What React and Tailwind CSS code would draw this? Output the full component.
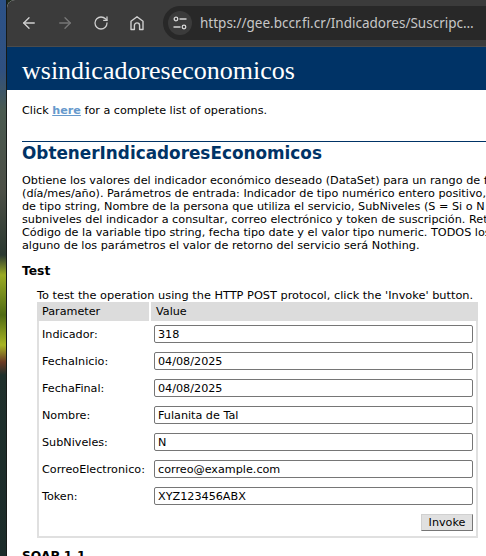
import React from "react";
import { ArrowLeft, ArrowRight, RotateCw } from "lucide-react";

const fields = [
  ["Indicador:", "318"],
  ["FechaInicio:", "04/08/2025"],
  ["FechaFinal:", "04/08/2025"],
  ["Nombre:", "Fulanita de Tal"],
  ["SubNiveles:", "N"],
  ["CorreoElectronico:", "correo@example.com"],
  ["Token:", "XYZ123456ABX"],
];

function TuneIcon() {
  return (
    <svg width="14" height="14" viewBox="0 0 14 14" fill="none" stroke="#d6d6d6" strokeWidth="1.3">
      <circle cx="3" cy="3" r="1.8" />
      <path d="M6.5 3H13.5" />
      <circle cx="11" cy="11" r="1.8" />
      <path d="M0.5 11H7.5" />
    </svg>
  );
}

function HomeIcon() {
  return (
    <svg width="16" height="16" viewBox="0 0 16 16" fill="none" stroke="#cfcfcf" strokeWidth="1.4" strokeLinejoin="round">
      <path d="M2 14.5V6.3L8 1.8L14 6.3V14.5H10.6V10.5A2.6 2.6 0 0 0 5.4 10.5V14.5Z" />
    </svg>
  );
}

export default function App() {
  return (
    <div className="flex w-[486px] h-[556px] overflow-hidden bg-[#1c2a1c] font-['DejaVu_Sans',sans-serif]">
      {/* wallpaper strip */}
      <div className="w-[7px] h-full shrink-0 border-r border-[#161a18] bg-[linear-gradient(to_bottom,#2c5288_0px,#2f5080_70px,#4a5a50_110px,#4c4f46_190px,#2a3830_255px,#9aab24_275px,#4f6a14_315px,#a8b524_345px,#6b3a24_362px,#1f302c_375px,#1c2c2a_556px)]" />

      <div className="flex-1 min-w-0 flex flex-col rounded-tl-[8px] overflow-hidden bg-white">
        {/* toolbar */}
        <div className="h-[47px] shrink-0 flex items-center bg-[#3b3b3b] border-b border-[#4b4b4b] pl-[13px]">
          <ArrowLeft size={18} color="#cfcfcf" strokeWidth={1.8} />
          <ArrowRight size={18} color="#777777" strokeWidth={1.8} className="ml-[18px]" />
          <RotateCw size={16} color="#cfcfcf" strokeWidth={1.9} className="ml-[19px]" />
          <div className="ml-[20px] shrink-0"><HomeIcon /></div>
          <div className="ml-[18px] flex-1 h-[34px] flex items-center rounded-l-full bg-[#282828] pl-[5px] whitespace-nowrap overflow-hidden">
            <div className="w-[24px] h-[24px] shrink-0 rounded-full bg-[#3b3b3b] flex items-center justify-center">
              <TuneIcon />
            </div>
            <span className="ml-[8px] text-[13.5px] text-[#c7c7c7] font-['Noto_Sans',sans-serif]">https://gee.bccr.fi.cr/Indicadores/Suscripc…</span>
          </div>
        </div>

        {/* banner */}
        <div className="h-[43px] shrink-0 bg-[#003366] pl-[15px] pt-[9px] text-[26px] leading-[30px] text-white font-['Liberation_Serif',serif]">
          wsindicadoreseconomicos
        </div>

        <div className="flex-1 min-w-0 pl-[15px] text-[11.2px] leading-[13px] text-black whitespace-nowrap">
          <p className="mt-[14px]">
            Click <a className="font-bold underline text-[#6699cc]">here</a> for a complete list of operations.
          </p>

          <div className="mt-[24px] border-t border-[#003366]" />
          <h2 className="mt-[1px] text-[16.85px] leading-[20px] font-bold text-[#003366]">ObtenerIndicadoresEconomicos</h2>

          <div className="mt-[11px] text-[11.23px]">
            <p>Obtiene los valores del indicador económico deseado (DataSet) para un rango de fechas</p>
            <p>(día/mes/año). Parámetros de entrada: Indicador de tipo numérico entero positivo, fechas</p>
            <p>de tipo string, Nombre de la persona que utiliza el servicio, SubNiveles (S = Si o N = No)</p>
            <p>subniveles del indicador a consultar, correo electrónico y token de suscripción. Retorna</p>
            <p>Código de la variable tipo string, fecha tipo date y el valor tipo numeric. TODOS los</p>
            <p>alguno de los parámetros el valor de retorno del servicio será Nothing.</p>
          </div>

          <h3 className="mt-[12px] text-[12.3px] leading-[15px] font-bold">Test</h3>

          <div className="ml-[15px] mt-[10px] w-[441px]">
            <p className="text-[11.33px]">To test the operation using the HTTP POST protocol, click the 'Invoke' button.</p>
            <div className="border-2 border-t-0 border-[#e0e0e0] pb-[5px]">
              <div className="flex h-[19px] items-center gap-[2px] -mx-[2px]">
                <div className="w-[112px] h-full bg-[#dcdcdc] pl-[5px] flex items-center">Parameter</div>
                <div className="flex-1 h-full bg-[#dcdcdc] pl-[5px] flex items-center">Value</div>
              </div>
              <div className="flex flex-col gap-[9px] mt-[4px]">
                {fields.map(([label, value]) => (
                  <div key={label} className="flex items-center h-[18px] pl-[3px]">
                    <label className="w-[112px] shrink-0">{label}</label>
                    <input
                      readOnly
                      value={value}
                      className="w-[319px] h-[18px] border border-[#767676] rounded-[2px] px-[3px] text-[11.2px] text-black outline-none font-['DejaVu_Sans',sans-serif]"
                    />
                  </div>
                ))}
              </div>
              <div className="flex justify-end pr-[3px] mt-[9px]">
                <button className="h-[17px] w-[52px] bg-[#e0e0e0] border border-[#767676] border-t-[#d0d0d0] border-l-[#d0d0d0] text-[11.2px] leading-[13px] text-black">
                  Invoke
                </button>
              </div>
            </div>
          </div>

          <h3 className="mt-[11px] text-[12.3px] leading-[15px] font-bold">SOAP 1.1</h3>
        </div>
      </div>
    </div>
  );
}
